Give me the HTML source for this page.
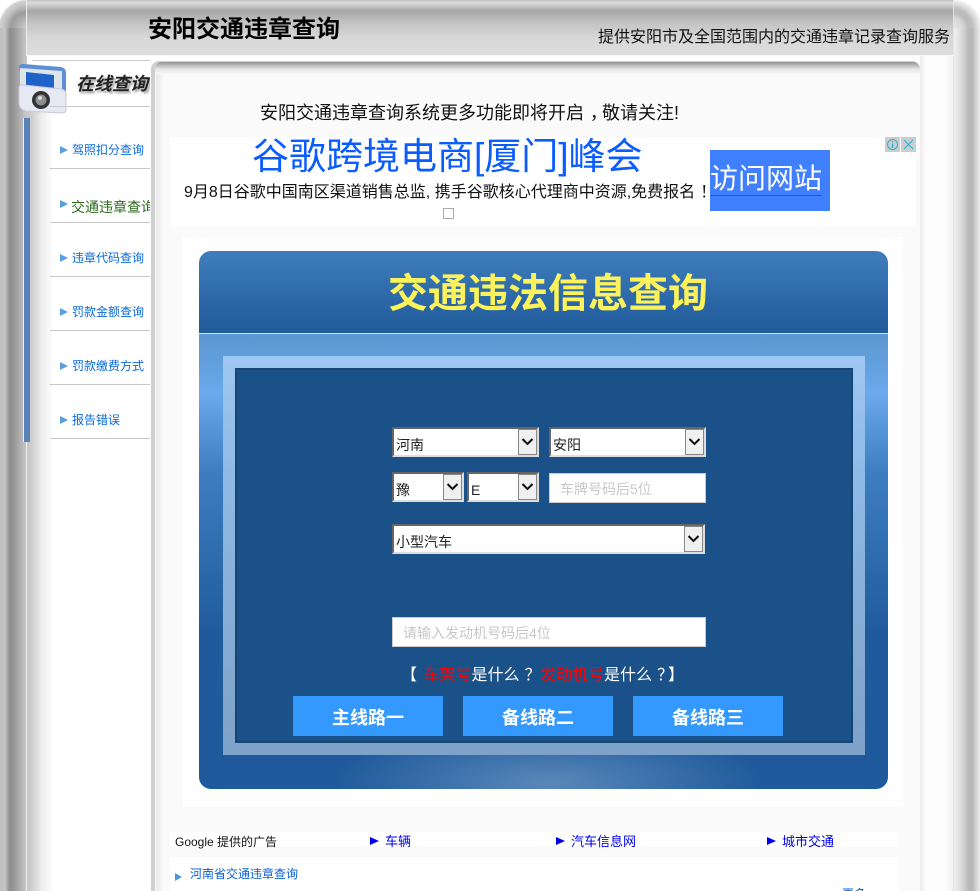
<!DOCTYPE html>
<html lang="zh"><head><meta charset="utf-8"><title>安阳交通违章查询</title>
<style>
html{margin:0;padding:0;width:980px;height:891px;overflow:hidden}
body{margin:0;padding:0;width:980px;height:891px;overflow:hidden;position:relative;background:#fff;font-family:"Liberation Sans","WenQuanYi Zen Hei","Noto Sans CJK SC",sans-serif;color:#000}
div,a,span,svg{position:absolute;white-space:nowrap}
a{text-decoration:none}
span.i{position:static}
span.p{position:relative;left:.32em}
.l{height:1px;background:#c8c8c8;left:50px;width:100px}
.m{left:72px;font-size:12px;color:#0a6ad8;line-height:14px}
.t{left:60px;width:0;height:0;border-left:8px solid #5a9fdc;border-top:4.5px solid transparent;border-bottom:4.5px solid transparent}
.sel{background:#fff;border:2px solid;border-color:#666 #ddd #ddd #666;box-sizing:border-box;height:30px;font-size:14px;color:#222}
.sel b{position:absolute;right:0;top:0;width:19px;height:26px;box-sizing:border-box;background:#f0f0f0;border:1px solid #888}
.sel b svg{left:0;top:7px}
.sel em{position:absolute;font-style:normal;left:2px;top:8px;line-height:16px}
.inp{background:#fff;border:1px solid #ccc;box-sizing:border-box;height:30px;font-size:14px;color:#c8c8c8;line-height:31px}
.btn{background:#3399ff;width:150px;height:40px;top:696px;color:#fff;font-size:18px;font-weight:bold;text-align:center;line-height:44px}
.b{font-size:13px;color:#0000ee;line-height:16px}
.tb{width:0;height:0;border-left:9px solid #0000ee;border-top:4.5px solid transparent;border-bottom:4.5px solid transparent;top:837px}
</style></head><body>
<!-- left strip -->
<div style="left:0;top:28px;width:60px;height:863px;background:linear-gradient(90deg,#c0c0c0 0,#c4c4c4 5px,#8c8c8c 10px,#a6a6a6 18px,#c6c6c6 26px,#cccccc 31px,#eeeeee 42px,#fff 54px,#fff 100%)"></div>
<!-- right strip -->
<div style="left:920px;top:28px;width:60px;height:863px;background:linear-gradient(90deg,#eeeeee 0,#fdfdfd 6px,#fdfdfd 24px,#f0f0f0 34px,#d8d8d8 42px,#bcbcbc 48px,#b6b6b6 52px,#d8d8d8 57px,#ececec 60px)"></div>
<!-- header -->
<div style="left:27px;top:0;width:926px;height:56px;background:linear-gradient(180deg,#c4c4c4 0,#dcdcdc 3px,#a6a6a6 11px,#c2c2c2 22px,#d8d8d8 38px,#dcdcdc 54px)"></div>
<div style="left:0;top:0;width:27px;height:28px;background:radial-gradient(circle at 27px 28px,#d2d2d2 0,#b4b4b4 8px,#9c9c9c 16px,#c4c4c4 23px,#cfcfcf 27px,#fff 29px)"></div>
<div style="left:0;top:28px;width:27px;height:28px;background:linear-gradient(90deg,#c0c0c0 0,#c4c4c4 5px,#8c8c8c 10px,#a6a6a6 18px,#c6c6c6 26px)"></div>
<div style="left:953px;top:0;width:27px;height:28px;background:radial-gradient(circle at 0 28px,#e8e8e8 0,#d8d8d8 9px,#bcbcbc 15px,#bcbcbc 19px,#dcdcdc 24px,#ececec 27px,#fff 29px)"></div>
<div style="left:26px;top:0;width:1px;height:56px;background:#eee"></div>
<div style="left:26px;top:438px;width:1px;height:453px;background:#eee"></div>
<div style="left:953px;top:0;width:1px;height:891px;background:#e4e4e4"></div>
<div style="left:27px;top:55px;width:926px;height:1px;background:#f8f8f8"></div>
<div style="left:148px;top:15px;font-size:24px;font-weight:bold;line-height:30px">安阳交通违章查询</div>
<div style="left:598px;top:28px;font-size:16px;line-height:20px;color:#111">提供安阳市及全国范围内的交通违章记录查询服务</div>

<!-- sidebar -->
<div style="left:27px;top:56px;width:125px;height:51px;background:#fff"></div>
<div style="left:32px;top:60px;width:118px;height:1px;background:#ccc"></div>
<svg style="left:16px;top:62px" width="54" height="54" viewBox="0 0 54 54"><path d="M3 6 Q3 2 7 2 L45 5 Q50 6 50 11 L50 44 L10 36 Z" fill="#5d8fd6"/><path d="M4 6 L46 9 L46 38 L4 34Z" fill="#dfe3ea"/><path d="M10 10 L38 13 L38 26 L10 25Z" fill="#1e63c8"/><path d="M3 26 Q3 22 8 23 L45 27 Q50 28 50 32 L50 47 Q50 51 46 51 L10 49 Q4 48 3 42Z" fill="#e6e8f3" stroke="#c9c9d5"/><circle cx="25" cy="38" r="9" fill="#333"/><circle cx="25" cy="38" r="5.5" fill="#8a8e8c"/><circle cx="24" cy="36" r="2" fill="#ddd"/></svg>
<div style="left:76px;top:73px;font-size:18px;font-weight:bold;font-style:italic;line-height:22px;color:#222;text-shadow:2px 2px 2px #999;width:74px;overflow:hidden">在线查询</div>
<div class="l" style="top:106px"></div>
<div style="left:23px;top:118px;width:7px;height:324px;background:#5b82b8;border-left:1px solid #eee;box-sizing:border-box"></div>
<div class="t" style="top:146px"></div><div class="m" style="top:143px">驾照扣分查询</div><div class="l" style="top:168px"></div>
<div class="t" style="top:200px"></div><div style="left:71px;top:199px;font-size:14px;color:#2d6a1e;line-height:16px;width:79px;overflow:hidden">交通违章查询</div><div class="l" style="top:222px"></div>
<div class="t" style="top:254px"></div><div class="m" style="top:251px">违章代码查询</div><div class="l" style="top:276px"></div>
<div class="t" style="top:308px"></div><div class="m" style="top:305px">罚款金额查询</div><div class="l" style="top:330px"></div>
<div class="t" style="top:362px"></div><div class="m" style="top:359px">罚款缴费方式</div><div class="l" style="top:384px"></div>
<div class="t" style="top:416px"></div><div class="m" style="top:413px">报告错误</div><div class="l" style="top:438px"></div>

<!-- main panel -->
<div style="left:151px;top:61px;width:769px;height:830px;background:#cfcfcf;border-radius:8px 8px 0 0"></div>
<div style="left:155px;top:62px;width:765px;height:829px;background:linear-gradient(180deg,#929292 0,#b8b8b8 3px,#e4e4e4 7px,#f9f9f9 12px);border-radius:7px 7px 0 0"></div>
<div style="left:156px;top:74px;width:764px;height:817px;background:linear-gradient(90deg,#e8e8e8 0,#fafafa 8px)"></div>
<div style="left:260px;top:102px;font-size:18px;line-height:22px;color:#111">安阳交通违章查询系统更多功能即将开启<span class="p">，</span>敬请关注!</div>

<!-- ad -->
<div style="left:170px;top:137px;width:746px;height:90px;background:#fff"></div>
<div style="left:252px;top:135px;font-size:37px;color:#0a5cff;line-height:44px">谷歌跨境电商[厦门]峰会</div>
<div style="left:184px;top:183px;font-size:16px;line-height:20px;color:#111">9月8日谷歌中国南区渠道销售总监, 携手谷歌核心代理商中资源,免费报名<span class="p">！</span></div>
<div style="left:710px;top:150px;width:120px;height:61px;background:#4080ff"></div>
<div style="left:710px;top:163px;font-size:28px;line-height:32px;color:#fff;border-bottom:1px solid #0a5cff">访问网站</div>
<div style="left:443px;top:208px;width:9px;height:9px;border:1px solid #aaa"></div>
<div style="left:885px;top:137px;width:15px;height:15px;background:#cdcdcd"></div>
<div style="left:901px;top:137px;width:15px;height:15px;background:#cdcdcd"></div>
<svg style="left:885px;top:137px" width="31" height="15" viewBox="0 0 31 15" fill="none" stroke="#1fb3d6"><circle cx="7.5" cy="7.5" r="5"/><path d="M7.5 6.5V11M7.5 4V5.2" stroke-width="1.3"/><path d="M19 3L28 12M28 3L19 12"/></svg>

<!-- query card -->
<div style="left:183px;top:237px;width:720px;height:570px;background:#fff"></div>
<div style="left:199px;top:251px;width:689px;height:82px;background:linear-gradient(180deg,#3f7dbd 0,#1f5a99 100%);border-radius:12px 12px 0 0"></div>
<div style="left:388px;top:270px;font-size:40px;font-weight:bold;color:#fdf25a;line-height:48px">交通违法信息查询</div>
<div style="left:199px;top:333px;width:689px;height:1px;background:#cfe4f5"></div>
<div style="left:199px;top:334px;width:689px;height:455px;background:linear-gradient(180deg,#5a96d0 0,#6aaaec 60px,#3d7dbf 140px,#1f5b9c 300px,#1f5b9c 100%);border-radius:0 0 12px 12px;overflow:hidden"><div style="left:140px;top:390px;width:420px;height:120px;background:radial-gradient(ellipse at center,rgba(130,165,205,.6) 0,rgba(31,91,156,0) 72%)"></div></div>
<div style="left:223px;top:356px;width:642px;height:399px;background:linear-gradient(180deg,#9ec8f2 0,#8fb9e6 120px,#7ea2c8 100%)"></div>
<div style="left:235px;top:368px;width:618px;height:375px;background:#1a5189;border:2px solid #174673;box-sizing:border-box"></div>

<!-- form -->
<div class="sel" style="left:392px;top:427px;width:147px"><em>河南</em><b><svg width="17" height="12" viewBox="0 0 17 12"><path d="M3.5 2L8.5 7L13.5 2" fill="none" stroke="#111" stroke-width="2"/></svg></b></div>
<div class="sel" style="left:549px;top:427px;width:157px"><em>安阳</em><b><svg width="17" height="12" viewBox="0 0 17 12"><path d="M3.5 2L8.5 7L13.5 2" fill="none" stroke="#111" stroke-width="2"/></svg></b></div>
<div class="sel" style="left:392px;top:472px;width:72px"><em>豫</em><b><svg width="17" height="12" viewBox="0 0 17 12"><path d="M3.5 2L8.5 7L13.5 2" fill="none" stroke="#111" stroke-width="2"/></svg></b></div>
<div class="sel" style="left:467px;top:472px;width:72px"><em>E</em><b><svg width="17" height="12" viewBox="0 0 17 12"><path d="M3.5 2L8.5 7L13.5 2" fill="none" stroke="#111" stroke-width="2"/></svg></b></div>
<div class="inp" style="left:549px;top:473px;width:157px;padding-left:10px">车牌号码后5位</div>
<div class="sel" style="left:392px;top:524px;width:313px"><em>小型汽车</em><b><svg width="17" height="12" viewBox="0 0 17 12"><path d="M3.5 2L8.5 7L13.5 2" fill="none" stroke="#111" stroke-width="2"/></svg></b></div>
<div class="inp" style="left:392px;top:617px;width:314px;padding-left:10px">请输入发动机号码后4位</div>
<div style="left:403px;top:666px;font-size:16px;line-height:20px;color:#fff"><span style="position:relative;left:-2px">【</span> <span class="i" style="color:#f00">车架号</span>是什么<span class="p">？</span> <span class="i" style="color:#f00">发动机号</span>是什么<span class="p">？</span>】</div>
<div class="btn" style="left:293px">主线路一</div>
<div class="btn" style="left:463px">备线路二</div>
<div class="btn" style="left:633px">备线路三</div>

<!-- bottom -->
<div style="left:170px;top:832px;width:728px;height:15px;background:#fff"></div>
<div style="left:175px;top:834px;font-size:12px;line-height:16px;color:#111">Google 提供的广告</div>
<div class="tb" style="left:370px"></div><a class="b" style="left:385px;top:834px">车辆</a>
<div class="tb" style="left:556px"></div><a class="b" style="left:571px;top:834px">汽车信息网</a>
<div class="tb" style="left:767px"></div><a class="b" style="left:782px;top:834px">城市交通</a>
<div style="left:170px;top:857px;width:728px;height:34px;background:#fff"></div>
<div style="left:175px;top:873px;width:0;height:0;border-left:7px solid #4a98dc;border-top:4px solid transparent;border-bottom:4px solid transparent"></div>
<div style="left:190px;top:867px;font-size:12px;line-height:14px;color:#0a5fd0">河南省交通违章查询</div>
<div style="left:842px;top:887px;font-size:12px;line-height:14px;color:#0a5fd0">更多</div>
</body></html>
